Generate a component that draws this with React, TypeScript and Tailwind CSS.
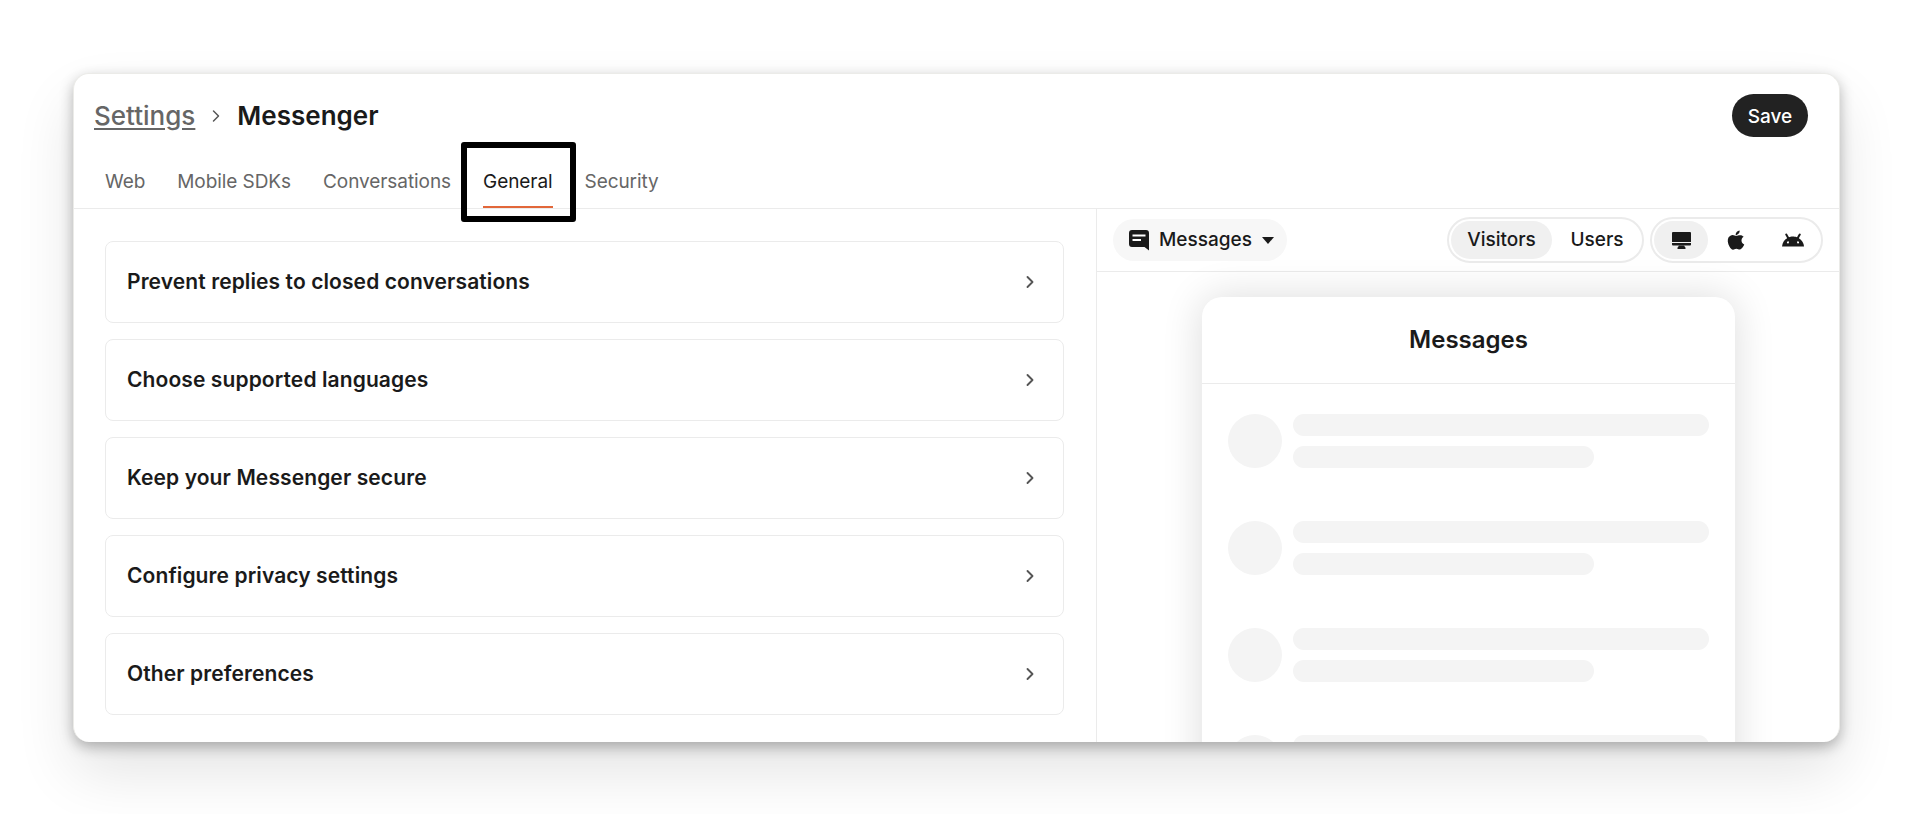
import { ChevronRight } from "lucide-react";
import { IoLogoApple } from "react-icons/io5";
import { SiAndroid } from "react-icons/si";

const settings = [
  "Prevent replies to closed conversations",
  "Choose supported languages",
  "Keep your Messenger secure",
  "Configure privacy settings",
  "Other preferences",
];

function SkeletonRow() {
  return (
    <div className="flex gap-[11px]">
      <div className="w-[54px] h-[54px] shrink-0 rounded-full bg-[#f4f4f4]" />
      <div className="flex-1 flex flex-col gap-[10px]">
        <div className="h-[22px] w-[416px] rounded-full bg-[#f4f4f4]" />
        <div className="h-[22px] w-[301px] rounded-full bg-[#f4f4f4]" />
      </div>
    </div>
  );
}

export default function App() {
  return (
    <div className="h-[814px] overflow-hidden bg-white pt-[73px] px-[73px] font-['Inter',sans-serif] text-[#1a1a1a]">
      <div className="h-[669px] rounded-[16px] overflow-hidden bg-white flex flex-col border-t border-x border-[#ebebe8] shadow-[0_5px_14px_rgba(0,0,0,0.28),0_30px_60px_rgba(0,0,0,0.11)]">
        <div className="h-[135px] shrink-0 border-b border-[#ebebeb] flex flex-col">
          <div className="flex items-center justify-between pt-[20px] pl-[20px] pr-[31px]">
            <div className="flex items-center">
              <span className="text-[26px] leading-[43px] font-medium text-[#666] underline underline-offset-[3px]">Settings</span>
              <ChevronRight className="w-[20px] h-[20px] mx-[11px] text-[#555]" strokeWidth={1.75} />
              <span className="text-[26px] leading-[43px] font-semibold">Messenger</span>
            </div>
            <button className="h-[43px] w-[76px] rounded-full bg-[#222] text-white text-[19px] leading-[43px] font-medium pt-px">Save</button>
          </div>
          <div className="flex mt-[23px] pl-[31px] text-[19px] tracking-[-0.07px] leading-[26px] text-[#666] gap-[32px]">
            <span className="h-[48px] pt-[9px]">Web</span>
            <span className="h-[48px] pt-[9px]">Mobile SDKs</span>
            <span className="h-[48px] pt-[9px]">Conversations</span>
            <span className="relative h-[48px] pt-[9px] text-[#1a1a1a] border-b-2 border-[#e2673a]">
              General
              <span className="absolute -left-[22px] -right-[23px] -top-[18px] -bottom-[16px] border-[6px] border-black rounded-[3px]" />
            </span>
            <span className="h-[48px] pt-[9px]">Security</span>
          </div>
        </div>
        <div className="flex-1 flex min-h-0">
          <div className="w-[1023px] shrink-0 border-r border-[#ebebeb] pt-[32px] pl-[31px] pr-[32px] flex flex-col gap-[16px]">
            {settings.map((label) => (
              <div key={label} className="h-[82px] shrink-0 rounded-[8px] border border-[#ebebeb] flex items-center justify-between pl-[21px] pr-[23px]">
                <span className="text-[21px] tracking-[0.1px] font-semibold">{label}</span>
                <ChevronRight className="w-[20px] h-[20px] text-[#555]" strokeWidth={2.25} />
              </div>
            ))}
          </div>
          <div className="flex-1 flex flex-col min-w-0">
            <div className="h-[63px] shrink-0 border-b border-[#ebebeb] flex items-center justify-between pl-[16px] pr-[16px]">
              <div className="h-[42px] w-[174px] rounded-full bg-[#f7f7f7] flex items-center pl-[16px] text-[19px] font-medium">
                <svg viewBox="0 0 20 21" className="w-[20px] h-[21px] mr-[10px]">
                  <path fill="#1a1a1a" d="M3 0h14a3 3 0 0 1 3 3v17.5L15.5 17H3a3 3 0 0 1-3-3V3a3 3 0 0 1 3-3z" />
                  <path fill="#fff" d="M3.5 4.5h13v2h-13zM3.5 9H12v2H3.5z" />
                </svg>
                <span>Messages</span>
                <svg viewBox="0 0 12 7" className="w-[12px] h-[7px] ml-[10px]">
                  <path fill="#1a1a1a" d="M0 0h12L6 7z" />
                </svg>
              </div>
              <div className="flex items-center gap-[6px]">
                <div className="h-[46px] w-[197px] rounded-full border-[2px] border-[#ebebeb] flex items-center p-[2px] text-[19px] font-medium">
                  <span className="h-[38px] w-[101px] rounded-full bg-[#f0f0f0] flex items-center justify-center">Visitors</span>
                  <span className="flex-1 text-center pl-[2px]">Users</span>
                </div>
                <div className="h-[46px] w-[173px] rounded-full border-[2px] border-[#ebebeb] flex items-center pl-[2px]">
                  <span className="h-[38px] w-[54px] shrink-0 rounded-full bg-[#f0f0f0] flex items-center justify-center">
                    <svg viewBox="0 0 19 17" className="w-[19px] h-[17px]">
                      <path fill="#1a1a1a" d="M1 0h17a1 1 0 0 1 1 1v9H0V1a1 1 0 0 1 1-1z" />
                      <path fill="#1a1a1a" d="M0 11h19v1.5a1 1 0 0 1-1 1H1a1 1 0 0 1-1-1z" />
                      <path fill="#1a1a1a" d="M7 13.5h5l1.5 2.2V17h-8v-1.3z" />
                    </svg>
                  </span>
                  <span className="w-[56px] shrink-0 flex justify-center">
                    <IoLogoApple className="w-[22px] h-[22px]" />
                  </span>
                  <span className="w-[58px] shrink-0 flex justify-center">
                    <SiAndroid className="w-[22px] h-[22px]" />
                  </span>
                </div>
              </div>
            </div>
            <div className="flex-1 min-h-0 pt-[25px] pl-[105px] pr-[104px]">
              <div className="h-[600px] rounded-[20px] bg-white shadow-[0_0_40px_rgba(0,0,0,0.14)]">
                <div className="h-[87px] border-b border-[#ebebeb] flex items-center justify-center text-[24px] font-semibold">Messages</div>
                <div className="pt-[30px] pl-[26px] pr-[26px] flex flex-col gap-[53px]">
                  <SkeletonRow />
                  <SkeletonRow />
                  <SkeletonRow />
                  <SkeletonRow />
                </div>
              </div>
            </div>
          </div>
        </div>
      </div>
    </div>
  );
}
